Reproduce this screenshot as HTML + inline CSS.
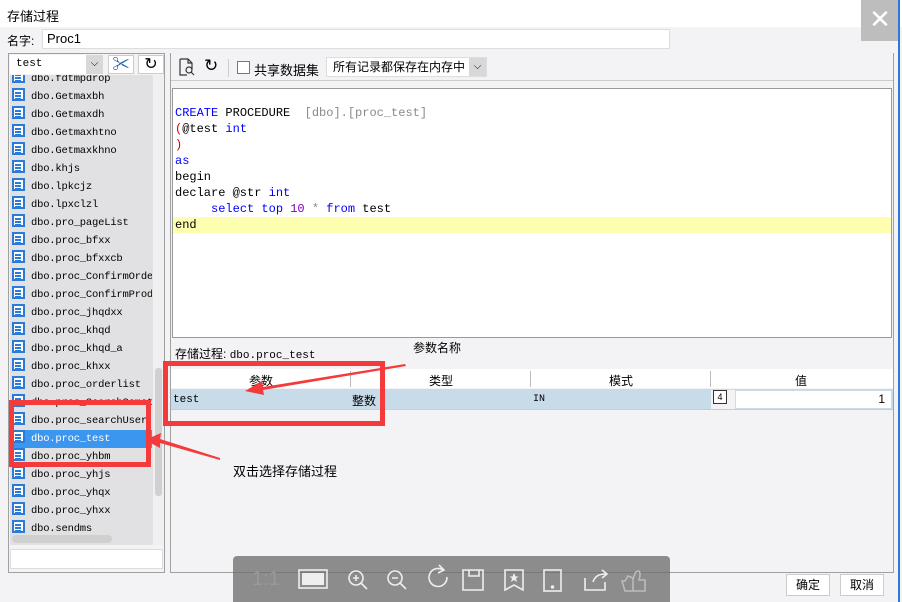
<!DOCTYPE html><html><head><meta charset="utf-8"><style>
*{margin:0;padding:0;box-sizing:border-box}
body{width:902px;height:602px;overflow:hidden;background:#f3f3f5;font-family:"Liberation Sans","Noto Sans CJK SC",sans-serif;font-size:12px;position:relative;color:#000}
.a{position:absolute}
.mono{font-family:"Liberation Mono","Noto Sans CJK SC",monospace}
.li{position:absolute;left:12px;height:18px;font-family:"Liberation Mono",monospace;font-size:10.5px;line-height:18px;white-space:nowrap;width:140px;overflow:hidden;letter-spacing:-0.2px}
.li i{display:inline-block;width:13px;height:13px;border:2px solid #2a7ad8;background:#fff;vertical-align:-2px;margin-right:6px;position:relative}
.li i:after{content:"";position:absolute;left:1px;top:2px;width:6px;height:1.5px;background:#2a7ad8;box-shadow:0 3px 0 #2a7ad8,0 6px 0 #2a7ad8}
.code div{height:16px;line-height:16px;white-space:pre}
.k{color:#0000ff}.r{color:#d40000}.g{color:#8a8a8a}.p{color:#8000c0}
.red{position:absolute;border:5px solid #f43a3a}
</style></head><body>
<div class="a" style="left:0;top:0;width:902px;height:27px;background:#fff"></div>
<div class="a" style="left:7px;top:6px;font-size:13px">存储过程</div>
<div class="a" style="left:861px;top:0;width:38px;height:41px;background:#bdbdbd;color:#fff;font-size:26px;text-align:center;line-height:38px">✕</div>
<div class="a" style="left:898px;top:0;width:2px;height:602px;background:#2a7ad8"></div>
<div class="a" style="left:7px;top:32px">名字:</div>
<div class="a" style="left:42px;top:29px;width:628px;height:20px;background:#fff;border:1px solid #ddd;padding-left:4px;line-height:18px;font-size:13px">Proc1</div>
<!-- left panel -->
<div class="a" style="left:8px;top:53px;width:157px;height:520px;border:1px solid #a0a0a0;background:#f3f3f5"></div>
<div class="a mono" style="left:10px;top:55px;width:93px;height:19px;background:#fff;padding-left:6px;line-height:19px;font-size:11px">test</div>
<div class="a" style="left:86px;top:55px;width:17px;height:19px;background:#d8d8d8;text-align:center;line-height:18px;font-size:10px">⌵</div>
<div class="a" style="left:108px;top:55px;width:26px;height:19px;background:#fff;border:1px solid #ccc;color:#1560b8;text-align:center;font-size:17px;line-height:17px;font-weight:bold">✂</div>
<div class="a" style="left:138px;top:55px;width:26px;height:19px;background:#fff;border:1px solid #ccc;text-align:center;font-size:16px;line-height:17px">↻</div>
<div class="a" style="left:10px;top:75px;width:143px;height:470px;background:#e1e1e4;overflow:hidden">
<div class="li" style="top:-5px;left:2px"><i></i>dbo.fdtmpdrop</div>
<div class="li" style="top:13px;left:2px"><i></i>dbo.Getmaxbh</div>
<div class="li" style="top:31px;left:2px"><i></i>dbo.Getmaxdh</div>
<div class="li" style="top:49px;left:2px"><i></i>dbo.Getmaxhtno</div>
<div class="li" style="top:67px;left:2px"><i></i>dbo.Getmaxkhno</div>
<div class="li" style="top:85px;left:2px"><i></i>dbo.khjs</div>
<div class="li" style="top:103px;left:2px"><i></i>dbo.lpkcjz</div>
<div class="li" style="top:121px;left:2px"><i></i>dbo.lpxclzl</div>
<div class="li" style="top:139px;left:2px"><i></i>dbo.pro_pageList</div>
<div class="li" style="top:157px;left:2px"><i></i>dbo.proc_bfxx</div>
<div class="li" style="top:175px;left:2px"><i></i>dbo.proc_bfxxcb</div>
<div class="li" style="top:193px;left:2px"><i></i>dbo.proc_ConfirmOrder</div>
<div class="li" style="top:211px;left:2px"><i></i>dbo.proc_ConfirmProd</div>
<div class="li" style="top:229px;left:2px"><i></i>dbo.proc_jhqdxx</div>
<div class="li" style="top:247px;left:2px"><i></i>dbo.proc_khqd</div>
<div class="li" style="top:265px;left:2px"><i></i>dbo.proc_khqd_a</div>
<div class="li" style="top:283px;left:2px"><i></i>dbo.proc_khxx</div>
<div class="li" style="top:301px;left:2px"><i></i>dbo.proc_orderlist</div>
<div class="li" style="top:319px;left:2px"><i></i>dbo.proc_SearchSomething</div>
<div class="li" style="top:337px;left:2px"><i></i>dbo.proc_searchUser</div>
<div class="li" style="top:355px;left:2px;background:#3b96f0;color:#fff"><i></i>dbo.proc_test</div>
<div class="li" style="top:373px;left:2px"><i></i>dbo.proc_yhbm</div>
<div class="li" style="top:391px;left:2px"><i></i>dbo.proc_yhjs</div>
<div class="li" style="top:409px;left:2px"><i></i>dbo.proc_yhqx</div>
<div class="li" style="top:427px;left:2px"><i></i>dbo.proc_yhxx</div>
<div class="li" style="top:445px;left:2px"><i></i>dbo.sendms</div>
<div class="a" style="left:2px;top:460px;width:100px;height:8px;background:#d0d0d0;border-radius:4px"></div>
</div>
<div class="a" style="left:153px;top:75px;width:11px;height:470px;background:#f0f0f0"></div>
<div class="a" style="left:155px;top:368px;width:7px;height:128px;background:#d0d0d0;border-radius:3px"></div>
<div class="a" style="left:10px;top:549px;width:153px;height:20px;background:#fff;border:1px solid #ddd"></div>
<!-- right panel -->
<div class="a" style="left:170px;top:53px;width:724px;height:520px;border:1px solid #a0a0a0;border-top:none"></div>
<div class="a" style="left:171px;top:53px;width:722px;height:28px;border-bottom:1px solid #ccc"></div>
<svg class="a" style="left:178px;top:58px" width="18" height="18" fill="none" stroke="#333" stroke-width="1.2"><path d="M2 1h8l4 4v6M2 1v16h7M10 1v4h4"/><circle cx="11" cy="12" r="3"/><path d="M13 14l3 3"/></svg>
<div class="a" style="left:204px;top:56px;font-size:17px">↻</div>
<div class="a" style="left:228px;top:59px;width:1px;height:18px;background:#ccc"></div>
<div class="a" style="left:237px;top:61px;width:13px;height:13px;border:1px solid #777;background:#fff"></div>
<div class="a" style="left:254px;top:60px;font-size:13px">共享数据集</div>
<div class="a" style="left:326px;top:57px;width:161px;height:20px;background:#fff;border:1px solid #ddd;padding-left:6px;line-height:18px;font-size:12px;overflow:hidden;white-space:nowrap">所有记录都保存在内存中</div>
<div class="a" style="left:469px;top:58px;width:17px;height:18px;background:#d8d8d8;text-align:center;font-size:10px;line-height:18px">⌵</div>
<div class="a" style="left:172px;top:88px;width:720px;height:250px;background:#fff;border:1px solid #999"></div>
<div class="a code mono" style="left:175px;top:105px;width:716px;font-size:12px">
<div><span class="k">CREATE</span> PROCEDURE  <span class="g">[dbo].[proc_test]</span></div>
<div><span class="r">(</span>@test <span class="k">int</span></div>
<div><span class="r">)</span></div>
<div><span class="k">as</span></div>
<div>begin</div>
<div>declare @str <span class="k">int</span></div>
<div>     <span class="k">select top</span> <span class="p">10</span> <span class="g">*</span> <span class="k">from</span> test</div>
<div style="background:#fefeb0;margin-left:-2px;padding-left:2px">end</div>
</div>
<div class="a" style="left:175px;top:345px"><span>存储过程:</span> <span class="mono" style="font-size:11px">dbo.proc_test</span></div>
<div class="a" style="left:413px;top:339px">参数名称</div>
<div class="a" style="left:171px;top:369px;width:722px;height:19px;background:#fff"></div>
<div class="a" style="left:171px;top:372px;width:180px;text-align:center">参数</div>
<div class="a" style="left:350px;top:371px;width:1px;height:16px;background:#bbb"></div>
<div class="a" style="left:351px;top:372px;width:180px;text-align:center">类型</div>
<div class="a" style="left:530px;top:371px;width:1px;height:16px;background:#bbb"></div>
<div class="a" style="left:531px;top:372px;width:180px;text-align:center">模式</div>
<div class="a" style="left:710px;top:371px;width:1px;height:16px;background:#bbb"></div>
<div class="a" style="left:711px;top:372px;width:180px;text-align:center">值</div>
<div class="a" style="left:171px;top:389px;width:722px;height:21px;background:#c7dbe9;border-bottom:1px solid #ccc"></div>
<div class="a mono" style="left:173px;top:394px;font-size:11px">test</div>
<div class="a" style="left:352px;top:392px">整数</div>
<div class="a mono" style="left:533px;top:394px;font-size:10px">IN</div>
<div class="a" style="left:711px;top:390px;width:24px;height:19px;background:#f3f3f5"></div>
<div class="a" style="left:713px;top:390px;width:14px;height:14px;border:1px solid #333;background:#fff;font-size:9px;text-align:center;line-height:12px">4</div>
<div class="a" style="left:736px;top:391px;width:155px;height:17px;background:#fff;text-align:right;padding-right:6px;line-height:17px">1</div>
<div class="a" style="left:786px;top:574px;width:44px;height:22px;background:#fff;border:1px solid #ccc;text-align:center;line-height:20px">确定</div>
<div class="a" style="left:840px;top:574px;width:44px;height:22px;background:#fff;border:1px solid #ccc;text-align:center;line-height:20px">取消</div>
<div class="a" style="left:233px;top:461px;font-size:13px">双击选择存储过程</div>
<div class="red" style="left:163px;top:361px;width:222px;height:65px"></div>
<div class="red" style="left:9px;top:400px;width:142px;height:67px"></div>
<svg class="a" style="left:0;top:0" width="902" height="602">
<polygon points="405,364 263,387 262,381 245,391 264,395 263,390 406,366" fill="#f43a3a"/>
<polygon points="220,458 160,439 161,433 145,440 160,448 160,443 220,460" fill="#f43a3a"/>
</svg>
<div class="a" style="left:233px;top:556px;width:437px;height:46px;background:rgba(110,110,110,0.78);border-radius:4px 4px 0 0"></div>
<div class="a" style="left:252px;top:568px;color:#999;font-size:20px">1:1</div>
<svg class="a" style="left:233px;top:556px" width="437" height="46" fill="none" stroke="#eee" stroke-width="1.6">
<rect x="66" y="14" width="28" height="18"/><rect x="69" y="17" width="22" height="12" fill="#eee" stroke="none"/>
<circle cx="123" cy="22" r="7"/><path d="M128 27l6 6M120 22h6M123 19v6"/>
<circle cx="162" cy="22" r="7"/><path d="M167 27l6 6M159 22h6"/>
<path d="M210 14a9 9 0 1 0 4 7M206 9l5 5-6 3"/>
<path d="M230 14h20v20h-20z M236 14v6h10v-6"/>
<path d="M272 14h18v20l-9-5-9 5z"/><path d="M281 17l1.5 3.5h3l-2.5 2 1 3.5-3-2-3 2 1-3.5-2.5-2h3z" fill="#eee" stroke="none"/>
<rect x="311" y="14" width="17" height="21"/><circle cx="319.5" cy="31" r="1" fill="#eee"/>
<path d="M352 22v12h20v-8M360 26c2-6 6-8 13-8M369 14l5 4-5 4"/>
<path d="M389 25l3 10h8v-13l-5-2-3 5z M400 23c2-6 3-8 5-8 3 0 2 6 1 9h6v11h-12" stroke="#bbb"/>
</svg>
</body></html>
